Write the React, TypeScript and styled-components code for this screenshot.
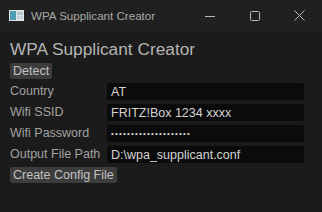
import styled, { createGlobalStyle } from 'styled-components'

const GlobalStyle = createGlobalStyle`
    html, body {
        margin: 0;
        padding: 0;
        background: #1b1b1b;
    }
    body {
        font-family: "Liberation Sans", Arial, sans-serif;
    }
`

const Window = styled.div`
    display: flex;
    flex-direction: column;
    width: 322px;
    height: 212px;
    background: #1b1b1b;
    overflow: hidden;
`

const TitleBar = styled.div`
    display: flex;
    align-items: center;
    height: 31px;
    background: #202020;
    flex-shrink: 0;
`

const AppIcon = styled.div`
    width: 15px;
    height: 11px;
    margin: 0 7px 0 9px;
    display: flex;
`

const WindowTitle = styled.div`
    flex: 1;
    font-size: 11.6px;
    color: #a8a8a8;
`

const ControlButton = styled.div`
    width: 45px;
    height: 31px;
    display: flex;
    align-items: center;
    justify-content: center;
    color: #b8b8b8;
`

const Content = styled.div`
    display: flex;
    flex-direction: column;
    align-items: flex-start;
    padding: 6px 18px 0 10px;
`

const Heading = styled.div`
    font-size: 17.3px;
    color: #b4b4b4;
    line-height: 24px;
    margin-bottom: 2px;
`

const Button = styled.div`
    background: #3c3c3c;
    color: #c2c2c2;
    font-size: 12.5px;
    line-height: 16px;
    padding: 0 3px;
    border-radius: 2px;
`

const Form = styled.div`
    display: grid;
    grid-template-columns: 97px 197px;
    row-gap: 4px;
    margin: 4px 0 4px;
    align-items: center;
`

const Label = styled.div`
    font-size: 12.5px;
    color: #a2a2a2;
    line-height: 17px;
    white-space: nowrap;
`

const Field = styled.div<{ $secret?: boolean }>`
    background: #0b0b0b;
    border-radius: 2px;
    height: 17px;
    padding: 0 4px;
    display: flex;
    align-items: center;
    color: #d4d4d4;
    font-size: ${p => (p.$secret ? '8px' : '12.5px')};
    letter-spacing: ${p => (p.$secret ? '1.2px' : '0')};
    white-space: nowrap;
    overflow: hidden;
`

const rows = [
    { label: 'Country', value: 'AT' },
    { label: 'Wifi SSID', value: 'FRITZ!Box 1234 xxxx' },
    { label: 'Wifi Password', value: '••••••••••••••••••••', secret: true },
    { label: 'Output File Path', value: 'D:\\wpa_supplicant.conf' },
]

const App = () => {
    return (
        <Window>
            <GlobalStyle />
            <TitleBar>
                <AppIcon>
                    <svg width="15" height="11" viewBox="0 0 15 11">
                        <rect x="0" y="0" width="15" height="11" fill="#dfe6ea" />
                        <rect x="1" y="1" width="6" height="9" fill="#4f9fb0" />
                        <rect x="8" y="2" width="6" height="3" fill="#b8c4cc" />
                        <rect x="8" y="6" width="6" height="3" fill="#c9d2d8" />
                    </svg>
                </AppIcon>
                <WindowTitle>WPA Supplicant Creator</WindowTitle>
                <ControlButton>
                    <svg width="10" height="10" viewBox="0 0 10 10">
                        <line x1="0" y1="5.5" x2="10" y2="5.5" stroke="currentColor" strokeWidth="1" />
                    </svg>
                </ControlButton>
                <ControlButton>
                    <svg width="10" height="10" viewBox="0 0 10 10">
                        <rect x="0.5" y="0.5" width="9" height="9" rx="1" fill="none" stroke="currentColor" strokeWidth="1" />
                    </svg>
                </ControlButton>
                <ControlButton>
                    <svg width="11" height="11" viewBox="0 0 11 11">
                        <path d="M0.5 0.5 L10.5 10.5 M10.5 0.5 L0.5 10.5" stroke="currentColor" strokeWidth="1" />
                    </svg>
                </ControlButton>
            </TitleBar>
            <Content>
                <Heading>WPA Supplicant Creator</Heading>
                <Button>Detect</Button>
                <Form>
                    {rows.map(r => (
                        <>
                            <Label key={r.label}>{r.label}</Label>
                            <Field key={r.label + '-v'} $secret={r.secret}>{r.value}</Field>
                        </>
                    ))}
                </Form>
                <Button>Create Config File</Button>
            </Content>
        </Window>
    )
}

export default App
